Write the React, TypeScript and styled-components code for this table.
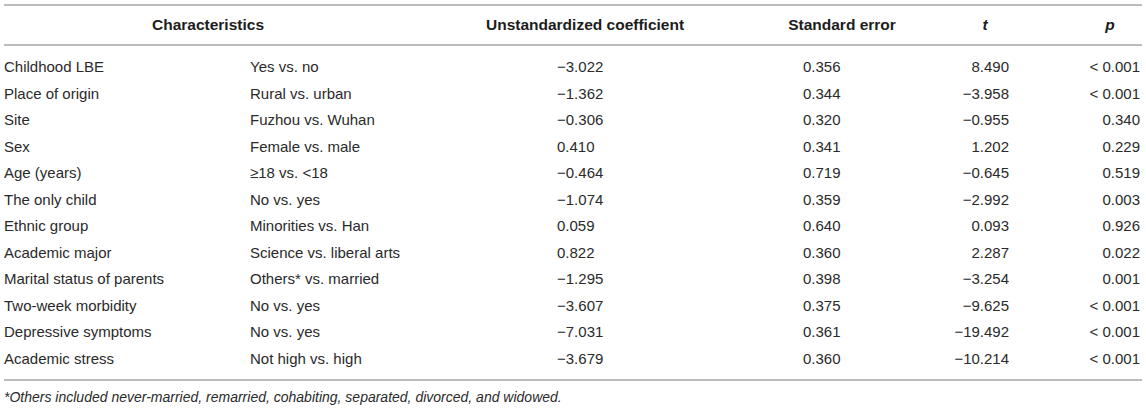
import React from 'react';
import styled, { createGlobalStyle } from 'styled-components';

const GlobalStyle = createGlobalStyle`
  body {
    margin: 0;
    background: #fff;
    font-family: "Liberation Sans", Arial, sans-serif;
    color: #2a2a2a;
  }
`;

const Wrapper = styled.div`
  padding: 4px 4px 0 4px;
  width: 1138px;
`;

const Table = styled.table`
  width: 1138px;
  table-layout: fixed;
  border-collapse: collapse;
  border-spacing: 0;
`;

const HeadRow = styled.tr`
  border-top: 2px solid #bcbcbc;
  border-bottom: 2px solid #bcbcbc;
`;

const HeadCell = styled.th<{ $pl?: number }>`
  height: 38px;
  padding: 0 0 0 ${(p) => p.$pl || 0}px;
  font-size: 15.5px;
  font-weight: 700;
  color: #1c1c1c;
  text-align: center;
  vertical-align: middle;
`;

const Body = styled.tbody`
  border-bottom: 2px solid #bcbcbc;

  tr:first-child td {
    padding-top: 8px;
  }

  tr:last-child td {
    padding-bottom: 7px;
  }
`;

const Cell = styled.td<{ $align: 'left' | 'right'; $pl?: number; $pr?: number }>`
  height: 26.5px;
  padding: 0 ${(p) => p.$pr || 0}px 0 ${(p) => p.$pl || 0}px;
  font-size: 15px;
  line-height: 26.5px;
  text-align: ${(p) => p.$align};
  white-space: nowrap;
`;

const Footnote = styled.p`
  margin: 0;
  padding-top: 8px;
  font-size: 14px;
  font-style: italic;
  color: #2a2a2a;
`;

const rows = [
  ['Childhood LBE', 'Yes vs. no', '\u22123.022', '0.356', '8.490', '< 0.001'],
  ['Place of origin', 'Rural vs. urban', '\u22121.362', '0.344', '\u22123.958', '< 0.001'],
  ['Site', 'Fuzhou vs. Wuhan', '\u22120.306', '0.320', '\u22120.955', '0.340'],
  ['Sex', 'Female vs. male', '0.410', '0.341', '1.202', '0.229'],
  ['Age (years)', '\u226518 vs. <18', '\u22120.464', '0.719', '\u22120.645', '0.519'],
  ['The only child', 'No vs. yes', '\u22121.074', '0.359', '\u22122.992', '0.003'],
  ['Ethnic group', 'Minorities vs. Han', '0.059', '0.640', '0.093', '0.926'],
  ['Academic major', 'Science vs. liberal arts', '0.822', '0.360', '2.287', '0.022'],
  ['Marital status of parents', 'Others* vs. married', '\u22121.295', '0.398', '\u22123.254', '0.001'],
  ['Two-week morbidity', 'No vs. yes', '\u22123.607', '0.375', '\u22129.625', '< 0.001'],
  ['Depressive symptoms', 'No vs. yes', '\u22127.031', '0.361', '\u221219.492', '< 0.001'],
  ['Academic stress', 'Not high vs. high', '\u22123.679', '0.360', '\u221210.214', '< 0.001'],
];

const App = () => (
  <Wrapper>
    <GlobalStyle />
    <Table>
      <colgroup>
        <col style={{ width: 246 }} />
        <col style={{ width: 162 }} />
        <col style={{ width: 346 }} />
        <col style={{ width: 168 }} />
        <col style={{ width: 118 }} />
        <col style={{ width: 98 }} />
      </colgroup>
      <thead>
        <HeadRow>
          <HeadCell colSpan={2}>Characteristics</HeadCell>
          <HeadCell>Unstandardized coefficient</HeadCell>
          <HeadCell>Standard error</HeadCell>
          <HeadCell><i>t</i></HeadCell>
          <HeadCell $pl={34}><i>p</i></HeadCell>
        </HeadRow>
      </thead>
      <Body>
        {rows.map((r) => (
          <tr key={r[0]}>
            <Cell $align="left">{r[0]}</Cell>
            <Cell $align="left">{r[1]}</Cell>
            <Cell $align="left" $pl={145}>{r[2]}</Cell>
            <Cell $align="left" $pl={45}>{r[3]}</Cell>
            <Cell $align="right" $pr={35}>{r[4]}</Cell>
            <Cell $align="right" $pr={2}>{r[5]}</Cell>
          </tr>
        ))}
      </Body>
    </Table>
    <Footnote>
      *Others included never-married, remarried, cohabiting, separated, divorced, and widowed.
    </Footnote>
  </Wrapper>
);

export default App;
